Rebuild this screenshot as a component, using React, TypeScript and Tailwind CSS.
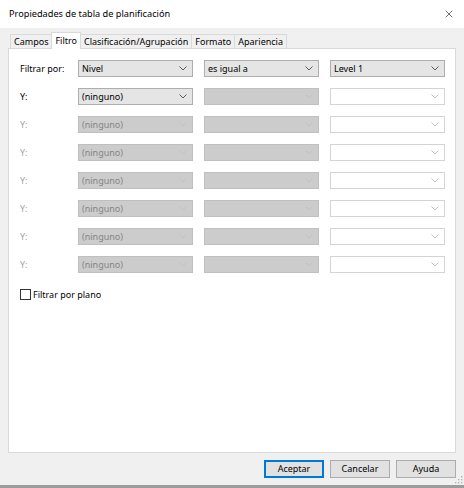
import { X } from "lucide-react";

const TABS = [
  { label: "Campos", active: false },
  { label: "Filtro", active: true },
  { label: "Clasificación/Agrupación", active: false },
  { label: "Formato", active: false },
  { label: "Apariencia", active: false },
];

type Look = "on" | "off" | "blank";

function Chevron({ tone }: { tone: string }) {
  return (
    <svg width="8" height="5" viewBox="0 0 8 5" className="shrink-0">
      <path d="M0.5 0.5 L4 4 L7.5 0.5" fill="none" stroke={tone} strokeWidth="1" />
    </svg>
  );
}

function Combo({ value, look, w }: { value?: string; look: Look; w: string }) {
  const box =
    look === "on"
      ? "bg-[#e5e5e5] border-[#adadad] text-black"
      : look === "off"
        ? "bg-[#cccccc] border-[#bfbfbf] text-[#858585]"
        : "bg-white border-[#d4d4d4]";
  const tone = look === "on" ? "#5a5a5a" : "#c2c2c2";
  return (
    <div className={`flex h-[17px] items-center justify-between border pl-[3px] pr-[5px] ${w} ${box}`}>
      <span className="whitespace-nowrap leading-[13px]">{value}</span>
      <Chevron tone={tone} />
    </div>
  );
}

function FilterRow({ label, first, enabled }: { label: string; first?: boolean; enabled: boolean }) {
  return (
    <div className="flex items-center">
      <span className={`w-[58px] ${enabled ? "text-black" : "text-[#a3a3a3]"}`}>{label}</span>
      <Combo value={first ? "Nivel" : "(ninguno)"} look={enabled ? "on" : "off"} w="w-[115px]" />
      <div className="w-[11px]" />
      <Combo value={first ? "es igual a" : ""} look={first ? "on" : "off"} w="w-[115px]" />
      <div className="w-[11px]" />
      <Combo value={first ? "Level 1" : ""} look={first ? "on" : "blank"} w="w-[115px]" />
    </div>
  );
}

function Btn({ label, primary }: { label: string; primary?: boolean }) {
  return (
    <button
      className={`flex h-[18px] w-[60px] items-center justify-center bg-[#e1e1e1] ${
        primary ? "border-2 border-[#0078d7]" : "border border-[#adadad]"
      }`}
    >
      {label}
    </button>
  );
}

export default function App() {
  return (
    <div
      className="flex h-[488px] w-[464px] flex-col border-b-[3px] border-[#9c9c9c] bg-[#f0f0f0] text-[9px] text-black"
      style={{ fontFamily: '"Noto Sans", "Open Sans", sans-serif' }}
    >
      <div className="flex h-[28px] shrink-0 items-center justify-between bg-white pl-[9px] pr-[9px]">
        <span className="text-[9.2px]">Propiedades de tabla de planificación</span>
        <X size={12} strokeWidth={1.3} className="text-[#222]" />
      </div>

      <div className="flex h-[20px] shrink-0 items-end pl-[10px]">
        {TABS.map((t) =>
          t.active ? (
            <div
              key={t.label}
              className="relative z-10 -mb-px -ml-px flex h-[17px] items-start border border-b-0 border-[#d9d9d9] bg-white px-[3px] pt-[1px]"
            >
              {t.label}
            </div>
          ) : (
            <div
              key={t.label}
              className="-ml-px flex h-[14px] items-center border border-b-0 border-[#d9d9d9] px-[3px] first:ml-0"
            >
              {t.label}
            </div>
          ),
        )}
      </div>

      <div className="mx-[8px] flex h-[405px] shrink-0 flex-col border border-[#d9d9d9] bg-white pl-[11px] pt-[11px]">
        <div className="flex flex-col gap-[11px]">
          <FilterRow label="Filtrar por:" first enabled />
          <FilterRow label="Y:" enabled />
          {Array.from({ length: 6 }).map((_, i) => (
            <FilterRow key={i} label="Y:" enabled={false} />
          ))}
        </div>
        <label className="mt-[15px] flex items-center gap-[2px]">
          <span className="h-[11px] w-[11px] border border-[#333] bg-white" />
          <span>Filtrar por plano</span>
        </label>
      </div>

      <div className="relative flex flex-1 items-center justify-end gap-[6px] pr-[8px]">
        <Btn label="Aceptar" primary />
        <Btn label="Cancelar" />
        <Btn label="Ayuda" />
        <svg width="8" height="8" viewBox="0 0 8 8" className="absolute bottom-[1px] right-[1px]">
          <rect x="6" y="0" width="1.3" height="1.3" fill="#b0b0b0" />
          <rect x="3" y="3" width="1.3" height="1.3" fill="#b0b0b0" />
          <rect x="6" y="3" width="1.3" height="1.3" fill="#b0b0b0" />
          <rect x="0" y="6" width="1.3" height="1.3" fill="#b0b0b0" />
          <rect x="3" y="6" width="1.3" height="1.3" fill="#b0b0b0" />
          <rect x="6" y="6" width="1.3" height="1.3" fill="#b0b0b0" />
        </svg>
      </div>
    </div>
  );
}
